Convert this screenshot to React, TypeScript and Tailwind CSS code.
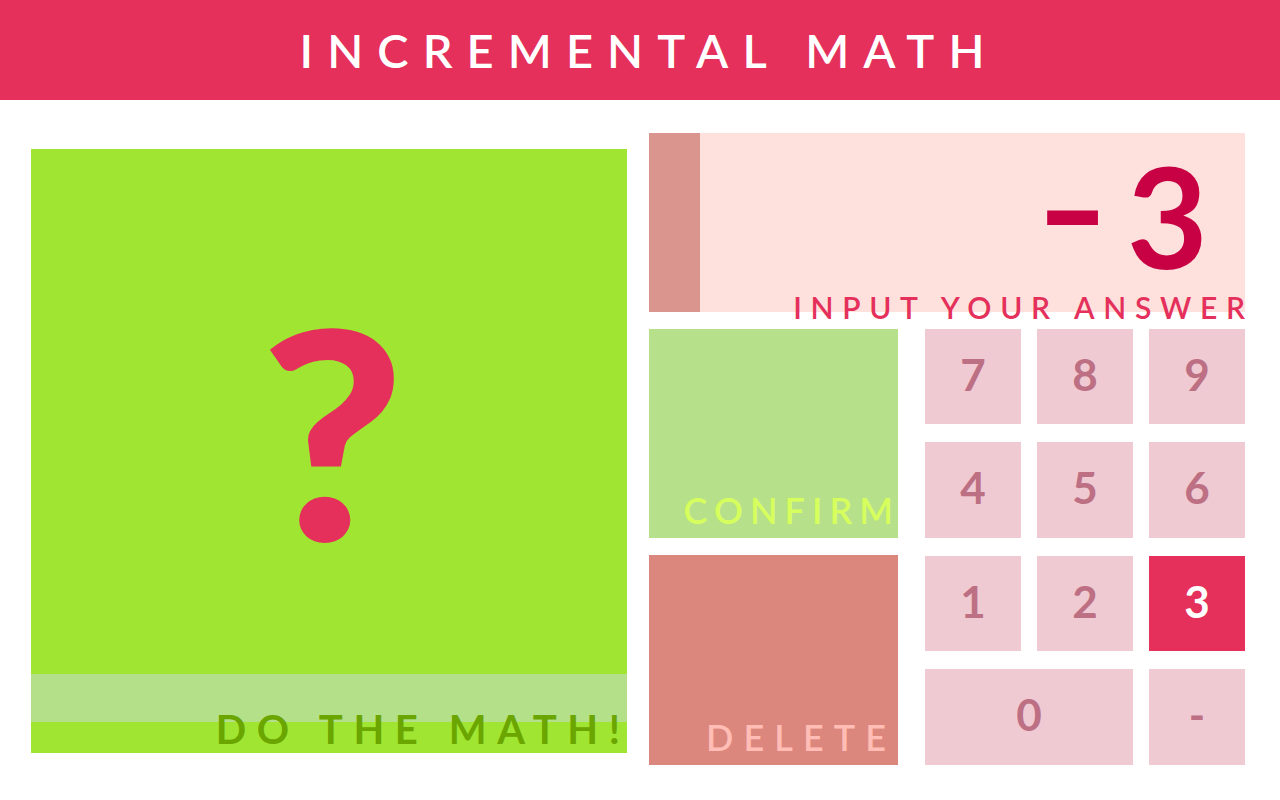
import React from "react";

const keys: { label: string; active?: boolean; wide?: boolean }[] = [
  { label: "7" },
  { label: "8" },
  { label: "9" },
  { label: "4" },
  { label: "5" },
  { label: "6" },
  { label: "1" },
  { label: "2" },
  { label: "3", active: true },
  { label: "0", wide: true },
  { label: "-" },
];

export default function App() {
  return (
    <div className="min-h-[800px] bg-white font-['Lato','Noto_Sans',sans-serif]">
      <header className="h-[100px] bg-[#E4305B] flex items-center justify-center">
        <h1 className="text-white text-[47px] leading-none font-semibold tracking-[0.3em] pl-[0.3em] ml-[4px]">
          INCREMENTAL MATH
        </h1>
      </header>

      <main className="flex gap-[22px] pl-[31px]">
        {/* question card */}
        <section className="mt-[49px] w-[596px] h-[604px] bg-[#A0E531] flex flex-col">
          <div className="flex-1 flex items-center justify-center pt-[34px] pl-[6px]">
            <span className="text-[#E4305B] text-[290px] leading-none font-black scale-x-[1.08]">?</span>
          </div>
          <div className="h-[48px] bg-[#B5E08A]" />
          <div className="-mt-[13px] mb-[4px] h-[40px] text-right pr-[7px]">
            <span className="text-[#6AA500] text-[40px] leading-none font-bold tracking-[0.265em] -mr-[0.265em]">
              DO THE MATH!
            </span>
          </div>
        </section>

        {/* answer side */}
        <section className="mt-[33px] w-[596px]">
          <div className="h-[179px] bg-[#FEE1DC] flex">
            <div className="w-[51px] bg-[#DB958F]" />
            <div className="flex-1 flex justify-end items-start pr-[37px] pt-[12px]">
              <span className="text-[#C80044] text-[140px] leading-none font-bold flex items-start">
                <span className="inline-block scale-x-[1.4] origin-right mr-[18px] -translate-y-[9px]">-</span>
                <span>3</span>
              </span>
            </div>
          </div>
          <div className="-mt-[20px] h-[30px] text-right">
            <span className="text-[#E4305B] text-[30px] leading-none font-semibold tracking-[0.29em] -mr-[0.29em]">
              INPUT YOUR ANSWER
            </span>
          </div>

          <div className="mt-[7px] grid grid-cols-[260px_96px_96px_96px] grid-rows-[95px_96px_95px_96px] gap-x-[16px] gap-y-[18px]">
            <button className="row-span-2 w-[249px] bg-[#B6E08A] flex items-end justify-end pr-[5px] pb-[10px]">
              <span className="text-[#D6FF5E] text-[36px] leading-none font-semibold tracking-[0.195em] -mr-[0.195em]">
                CONFIRM
              </span>
            </button>
            {keys.slice(0, 6).map((k) => (
              <Key key={k.label} {...k} />
            ))}
            <button className="row-span-2 w-[249px] bg-[#DC877D] flex items-end justify-end pr-[12px] pb-[10px] -mt-[1px]">
              <span className="text-[#FFBDB6] text-[36px] leading-none font-semibold tracking-[0.28em] -mr-[0.28em]">
                DELETE
              </span>
            </button>
            {keys.slice(6).map((k) => (
              <Key key={k.label} {...k} />
            ))}
          </div>
        </section>
      </main>
    </div>
  );
}

function Key({ label, active, wide }: { label: string; active?: boolean; wide?: boolean }) {
  return (
    <button
      className={`${wide ? "col-span-2" : ""} ${
        active ? "bg-[#E4305B] text-white" : "bg-[#EFCAD2] text-[#BD7084]"
      } flex items-center justify-center pb-[6px] text-[44px] leading-none font-bold`}
    >
      {label}
    </button>
  );
}
